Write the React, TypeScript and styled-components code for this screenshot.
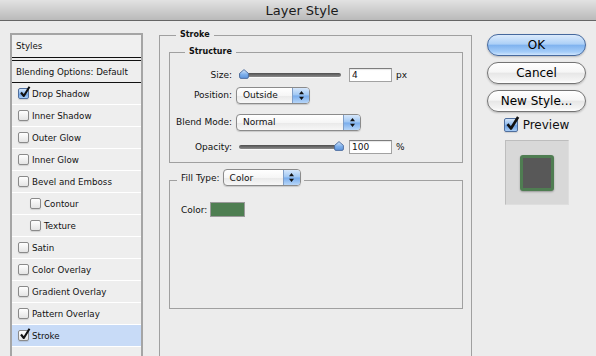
import React from 'react';
import styled, { createGlobalStyle } from 'styled-components';

const GlobalStyle = createGlobalStyle`
  html, body { margin: 0; padding: 0; background: #ececec; }
  body { font-family: "DejaVu Sans", "Lucida Grande", sans-serif; color: #111; }
  * { box-sizing: border-box; }
`;

const Window = styled.div`
  width: 596px;
  height: 356px;
  overflow: hidden;
  background: #ececec;
  display: flex;
  flex-direction: column;
`;

const TitleBar = styled.div`
  height: 21px;
  flex: none;
  border-bottom: 1px solid #666;
  background: linear-gradient(#e2e2e2, #bababa);
  display: flex;
  align-items: center;
  justify-content: center;
  padding-left: 8px;
  font-size: 13px;
  color: #1a1a1a;
`;

const Body = styled.div`
  flex: 1;
  display: flex;
  align-items: flex-start;
  padding-left: 10px;
`;

/* ---------- left style list ---------- */

const StyleList = styled.div`
  margin-top: 12px;
  width: 133px;
  height: 340px;
  flex: none;
  border: 2px solid #a5a5a5;
  background: #eeeeee;
  display: flex;
  flex-direction: column;
  font-size: 8.7px;
`;

const ListHeader = styled.div`
  height: 23px;
  padding-left: 4px;
  display: flex;
  align-items: center;
  border-bottom: 1px solid #111;
  background: #f0f0f0;
`;

const BlendingRow = styled.div`
  margin-top: 2px;
  height: 23px;
  padding-left: 4px;
  display: flex;
  align-items: center;
  border-top: 1px solid #111;
  border-bottom: 1px solid #111;
`;

const ListItem = styled.div<{ $indent?: boolean; $selected?: boolean }>`
  height: 22px;
  flex: none;
  display: flex;
  align-items: center;
  gap: 3px;
  padding-left: ${p => (p.$indent ? 18 : 6)}px;
  border-bottom: 1px solid #ffffff;
  background: ${p => (p.$selected ? '#c8dbf7' : 'transparent')};
`;

const Box = styled.span<{ $size: number; $blue?: boolean }>`
  position: relative;
  flex: none;
  width: ${p => p.$size}px;
  height: ${p => p.$size}px;
  border: 1px solid ${p => (p.$blue ? '#4f6f9e' : '#8a8a8a')};
  border-radius: 2px;
  background: ${p =>
    p.$blue
      ? 'linear-gradient(#d4e6fb, #8ab8ee 50%, #6ca1e6 55%, #a8cdf6)'
      : 'linear-gradient(#ffffff, #e4e4e4)'};
  box-shadow: 0 1px 1px rgba(0, 0, 0, 0.12);
`;

const CheckMark = styled.svg`
  position: absolute;
  left: 0;
  top: -3px;
  overflow: visible;
`;

type CheckProps = { size: number; checked?: boolean; blue?: boolean };

const Checkbox: React.FC<CheckProps> = ({ size, checked, blue }) => (
  <Box $size={size} $blue={blue}>
    {checked && (
      <CheckMark width={size + 1} height={size + 1} viewBox="0 0 12 12">
        <path d="M2 6.5 L4.8 10 L10.5 0.8" stroke="#111" strokeWidth="2.1" fill="none" strokeLinejoin="round" />
      </CheckMark>
    )}
  </Box>
);

/* ---------- middle group boxes ---------- */

const StrokeGroup = styled.fieldset`
  margin: 8px 0 0 16px;
  padding: 5px 8px 0 9px;
  width: 313px;
  height: 360px;
  min-width: 0;
  flex: none;
  border: 1px solid #a0a0a0;
`;

const InnerGroup = styled.fieldset<{ $height?: number }>`
  margin: 0;
  padding: 8px 0 6px 0;
  min-width: 0;
  width: 294px;
  border: 1px solid #a0a0a0;
  ${p => (p.$height ? `height: ${p.$height}px;` : '')}
  & + & {
    margin-top: 6px;
  }
`;

const Legend = styled.legend<{ $offset: number }>`
  margin-left: ${p => p.$offset}px;
  padding: 0 4px;
  font-weight: bold;
  font-size: 8px;
  line-height: 12px;
`;

const FillLegend = styled.legend`
  margin-left: 7px;
  padding: 0 3px 6px 4px;
  font-size: 9px;
`;

const LegendInner = styled.span`
  display: flex;
  align-items: center;
  gap: 3px;
  height: 17px;
`;

const Row = styled.div<{ $top: number }>`
  height: 18px;
  margin-top: ${p => p.$top}px;
  display: flex;
  align-items: center;
  font-size: 9px;
`;

const Label = styled.span`
  width: 62px;
  margin-right: 4px;
  text-align: right;
  flex: none;
`;

const SliderWrap = styled.div`
  position: relative;
  width: 106px;
  height: 12px;
  padding: 0 1px 0 3px;
  display: flex;
  align-items: center;
  flex: none;
`;

const Track = styled.div`
  flex: 1;
  height: 4px;
  border-radius: 2px;
  background: linear-gradient(#4e4e4e, #8c8c8c);
  box-shadow: 0 1px 0 rgba(255, 255, 255, 0.7);
`;

const Thumb = styled.svg`
  position: absolute;
  top: 0;
`;

const Slider: React.FC<{ value: number; min: number; max: number }> = ({ value, min, max }) => {
  const f = (value - min) / (max - min);
  return (
    <SliderWrap>
      <Track />
      <Thumb width="10" height="10" viewBox="0 0 10 10" style={{ left: 2 + f * 96 }}>
        <defs>
          <linearGradient id="thumbg" x1="0" y1="0" x2="0" y2="1">
            <stop offset="0" stopColor="#d8e8fb" />
            <stop offset="0.55" stopColor="#7eb0ec" />
            <stop offset="1" stopColor="#5d94dc" />
          </linearGradient>
        </defs>
        <path
          d="M5 0.6 L9.4 4.4 V8 Q9.4 9.4 8 9.4 H2 Q0.6 9.4 0.6 8 V4.4 Z"
          fill="url(#thumbg)"
          stroke="#4a6a9c"
          strokeWidth="0.9"
        />
      </Thumb>
    </SliderWrap>
  );
};

const NumberField = styled.input`
  width: 43px;
  height: 14px;
  margin: 0 0 0 7px;
  padding: 0 0 0 2px;
  border: 1px solid #a2a2a2;
  border-top-color: #7d7d7d;
  background: #fff;
  font: 9px "DejaVu Sans", sans-serif;
  color: #111;
  outline: none;
  box-shadow: inset 0 1px 1px rgba(0, 0, 0, 0.1);
`;

const Unit = styled.span`
  margin-left: 4px;
`;

const PopupBox = styled.div<{ $w: number }>`
  width: ${p => p.$w}px;
  height: 17px;
  flex: none;
  display: flex;
  border: 1px solid #8b8b8b;
  border-radius: 4px;
  overflow: hidden;
  background: linear-gradient(#ffffff 0%, #f6f6f6 50%, #e9e9e9 52%, #f7f7f7 100%);
  box-shadow: 0 1px 1px rgba(0, 0, 0, 0.15);
  font-size: 9px;
  font-weight: normal;
`;

const PopupText = styled.span`
  flex: 1;
  padding-left: 6px;
  display: flex;
  align-items: center;
`;

const PopupArrows = styled.span`
  width: 17px;
  flex: none;
  border-left: 1px solid #7f9dc6;
  background: linear-gradient(#d6e7fb 0%, #9ec6f3 48%, #78acec 52%, #b7d6f8 100%);
  display: flex;
  align-items: center;
  justify-content: center;
`;

const Popup: React.FC<{ w: number; text: string }> = ({ w, text }) => (
  <PopupBox $w={w}>
    <PopupText>{text}</PopupText>
    <PopupArrows>
      <svg width="7" height="11" viewBox="0 0 7 11">
        <path d="M3.5 1 L6 4.3 H1 Z M1 6.7 H6 L3.5 10 Z" fill="#111" />
      </svg>
    </PopupArrows>
  </PopupBox>
);

const FillBody = styled.div`
  padding: 2px 0 0 11px;
`;

const ColorRow = styled.div`
  height: 15px;
  display: flex;
  align-items: center;
  gap: 3px;
  font-size: 9px;
`;

const ColorSwatch = styled.span<{ $color: string }>`
  width: 35px;
  height: 15px;
  border: 1px solid #9a9a9a;
  background: ${p => p.$color};
`;

/* ---------- right column ---------- */

const Actions = styled.div`
  margin: 13px 0 0 15px;
  width: 99px;
  flex: none;
  display: flex;
  flex-direction: column;
  align-items: center;
  gap: 6px;
`;

const AquaButton = styled.button<{ $primary?: boolean }>`
  width: 99px;
  height: 22px;
  padding: 0;
  border-radius: 11px;
  font: 12px "DejaVu Sans", sans-serif;
  color: #000;
  border: 1px solid ${p => (p.$primary ? '#46699e' : '#747474')};
  background: ${p =>
    p.$primary
      ? 'linear-gradient(#dcebfc 0%, #add0f7 45%, #80b3ef 52%, #a5cdf9 85%, #d0e6fd 100%)'
      : 'linear-gradient(#ffffff 0%, #f6f6f6 45%, #e7e7e7 52%, #f3f3f3 85%, #ffffff 100%)'};
  box-shadow: 0 1px 2px rgba(0, 0, 0, 0.22);
`;

const PreviewRow = styled.div`
  height: 15px;
  margin-top: -1px;
  display: flex;
  align-items: center;
  gap: 5px;
  font-size: 12px;
`;

const PreviewSwatch = styled.div`
  width: 64px;
  height: 65px;
  margin-top: 2px;
  background: #d8d8d8;
  border: 1px solid #bdbdbd;
  border-right-color: #dedede;
  border-bottom-color: #dedede;
  display: flex;
  align-items: center;
  justify-content: center;
`;

const PreviewShape = styled.div`
  width: 34px;
  height: 36px;
  background: #585858;
  border: 3px solid #4f7d52;
  border-radius: 3px;
  box-shadow: 0 1px 2px rgba(0, 0, 0, 0.3);
`;

const styleItems: { label: string; checked?: boolean; blue?: boolean; indent?: boolean; selected?: boolean }[] = [
  { label: 'Drop Shadow', checked: true, blue: true },
  { label: 'Inner Shadow' },
  { label: 'Outer Glow' },
  { label: 'Inner Glow' },
  { label: 'Bevel and Emboss' },
  { label: 'Contour', indent: true },
  { label: 'Texture', indent: true },
  { label: 'Satin' },
  { label: 'Color Overlay' },
  { label: 'Gradient Overlay' },
  { label: 'Pattern Overlay' },
  { label: 'Stroke', checked: true, selected: true },
];

export default function App() {
  return (
    <>
      <GlobalStyle />
      <Window>
        <TitleBar>Layer Style</TitleBar>
        <Body>
          <StyleList>
            <ListHeader>Styles</ListHeader>
            <BlendingRow>Blending Options: Default</BlendingRow>
            {styleItems.map(it => (
              <ListItem key={it.label} $indent={it.indent} $selected={it.selected}>
                <Checkbox size={11} checked={it.checked} blue={it.blue} />
                <span>{it.label}</span>
              </ListItem>
            ))}
          </StyleList>

          <StrokeGroup>
            <Legend $offset={7}>Stroke</Legend>
            <InnerGroup>
              <Legend $offset={15}>Structure</Legend>
              <Row $top={0}>
                <Label>Size:</Label>
                <Slider value={4} min={1} max={250} />
                <NumberField readOnly defaultValue="4" />
                <Unit>px</Unit>
              </Row>
              <Row $top={2}>
                <Label>Position:</Label>
                <Popup w={74} text="Outside" />
              </Row>
              <Row $top={9}>
                <Label>Blend Mode:</Label>
                <Popup w={125} text="Normal" />
              </Row>
              <Row $top={7}>
                <Label>Opacity:</Label>
                <Slider value={100} min={0} max={100} />
                <NumberField readOnly defaultValue="100" />
                <Unit>%</Unit>
              </Row>
            </InnerGroup>
            <InnerGroup $height={140}>
              <FillLegend>
                <LegendInner>
                  <span>Fill Type:</span>
                  <Popup w={78} text="Color" />
                </LegendInner>
              </FillLegend>
              <FillBody>
                <ColorRow>
                  <span>Color:</span>
                  <ColorSwatch $color="#4e7e51" />
                </ColorRow>
              </FillBody>
            </InnerGroup>
          </StrokeGroup>

          <Actions>
            <AquaButton $primary>OK</AquaButton>
            <AquaButton>Cancel</AquaButton>
            <AquaButton>New Style...</AquaButton>
            <PreviewRow>
              <Checkbox size={14} checked blue />
              <span>Preview</span>
            </PreviewRow>
            <PreviewSwatch>
              <PreviewShape />
            </PreviewSwatch>
          </Actions>
        </Body>
      </Window>
    </>
  );
}
